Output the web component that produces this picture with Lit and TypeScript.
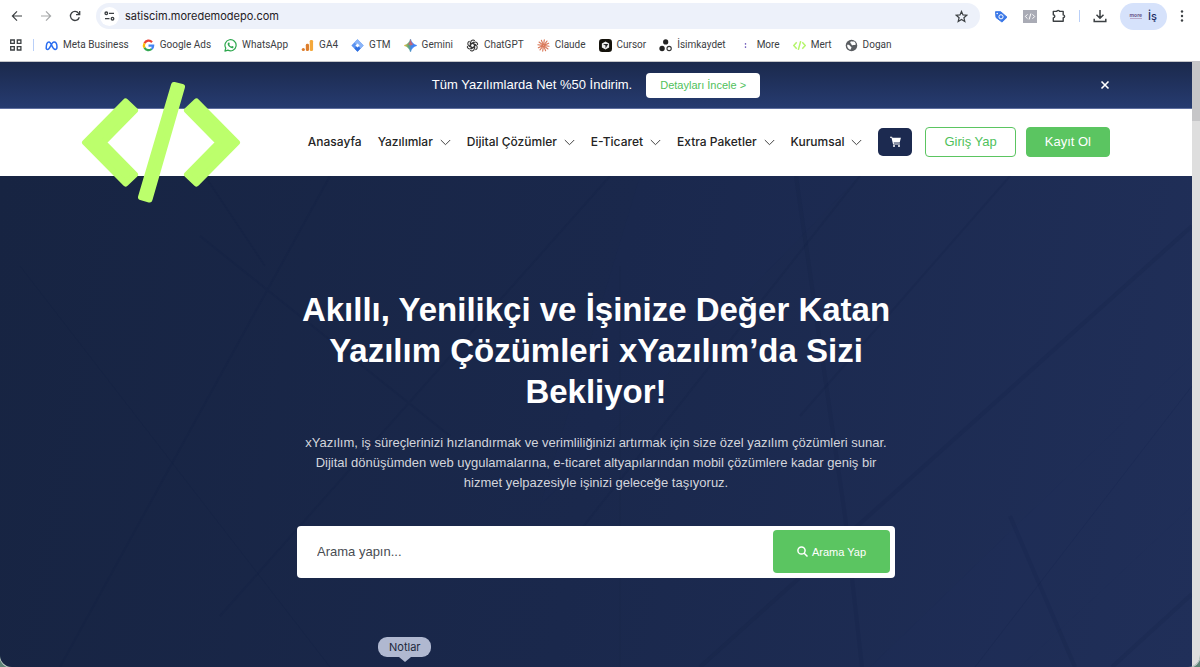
import { LitElement, html, css, svg, nothing } from "lit";
import { customElement } from "lit/decorators.js";

const bookmarkIcons: Record<string, unknown> = {
  meta: svg`<path d="M1.300 10C1.300 6 2.600 3.200 4.300 3.200c2.700 0 3.300 8 6.600 8 1.400 0 2-1.100 2-2.600C12.900 5.400 11.600 3.200 9.700 3.200c-2.900 0-4.200 8-6.800 8-1 0-1.600-.4-1.600-1.200z" fill="none" stroke="#2a6df0" stroke-width="1.600"/>`,
  google: svg`<g fill="none" stroke-width="2.400"><path d="M10.800 3.400A4.900 4.900 0 0 0 2.700 4.600" stroke="#ea4335"/><path d="M2.700 4.600a5 5 0 0 0 0 4.800" stroke="#fbbc05"/><path d="M2.700 9.400a5 5 0 0 0 7.700 1.400" stroke="#34a853"/><path d="M10.400 10.800A5 5 0 0 0 12 7.200H7" stroke="#4285f4"/></g>`,
  whatsapp: svg`<path d="M1 13l.9-3.200A6 6 0 1 1 4.200 12z" fill="#fff" stroke="#2fa84f" stroke-width="1.300" stroke-linejoin="round"/><path d="M4.900 3.800c.4-.3.700-.1.900.3l.4 1c.1.300-.4.700-.5 1 .5 1 1.200 1.700 2.200 2.100.3 0 .7-.9 1-.7l1.200.6c.4.200.2 1.100-.3 1.500-1.700 1.100-5.700-1.600-5.900-4.200 0-.7.500-1.300 1-1.600z" fill="#2fa84f"/>`,
  ga: svg`<rect x="9.400" y="1" width="3.600" height="12" rx="1.500" fill="#f4a83a"/><rect x="5.200" y="5.200" width="3.400" height="7.800" rx="1.500" fill="#dd7d2b"/><circle cx="2.500" cy="11.300" r="1.700" fill="#dd7d2b"/>`,
  gtm: svg`<path d="M7 .4 13.600 7 7 13.600.4 7z" fill="#5b93f0"/><path d="M7 .4 13.600 7 10.300 10.300 3.700 3.700z" fill="#8ab4f8"/><path d="M7 7l3.300 3.300L7 13.600 3.700 10.300z" fill="#2f6fe0"/><path d="M7 4.800 9.200 7 7 9.200 4.800 7z" fill="#fff"/>`,
  gemini: svg`<defs><linearGradient id="gem" x1="0" y1="0" x2="1" y2="0"><stop offset="0" stop-color="#f3c13a"/><stop offset=".35" stop-color="#5fa779"/><stop offset=".6" stop-color="#3f82f5"/><stop offset="1" stop-color="#4285f4"/></linearGradient></defs><path d="M7 0C7.900 3.500 10.500 6.100 14 7 10.500 7.900 7.900 10.500 7 14 6.100 10.500 3.500 7.900 0 7 3.500 6.100 6.100 3.500 7 0z" fill="url(#gem)" stroke="url(#gem)" stroke-width=".5"/><path d="M7 0C7.700 3 8.800 4.800 10 5.800L7 7 4.200 5.700C5.700 4.700 6.600 3 7 0z" fill="#e85a5a" opacity=".75"/>`,
  chatgpt: svg`<g fill="none" stroke="#333" stroke-width="1.100">${[0, 60, 120, 180, 240, 300].map((a) => svg`<path d="M5 7.900V3.700a2.500 2.500 0 0 1 4.400-1.600M5 5.400l3.800-2.200" transform="rotate(${a} 7 7)"/>`)}</g>`,
  claude: svg`<g stroke="#d97757" stroke-width="1.200" stroke-linecap="round">${[8, 38, 66, 98, 128, 158, 188, 218, 246, 278, 308, 338].map((a) => svg`<path d="M7 6V.9" transform="rotate(${a} 7 7)"/>`)}</g>`,
  cursor: svg`<rect width="14" height="14" rx="3.500" fill="#14120b"/><path d="M7 2.600l3.900 2.200v4.400L7 11.400 3.100 9.200V4.800z" fill="#eee"/><path d="M4.200 5.300h5.700L7 10.200V7z" fill="#222"/>`,
  isim: svg`<circle cx="7.200" cy="3.200" r="2.800" fill="#222"/><circle cx="3.300" cy="10.200" r="2.900" fill="#222"/><circle cx="10.900" cy="10.200" r="2.300" fill="none" stroke="#333" stroke-width="1.200"/>`,
  more: svg`<path d="M7 4.400v1.800M7 7.800v1.800" stroke="#7a68c0" stroke-width="1.400"/>`,
  mert: svg`<path d="M4 3.600.8 7 4 10.400M10 3.600 13.200 7 10 10.400M8.300 2.300 5.700 11.700" fill="none" stroke="#b4f56a" stroke-width="1.600"/>`,
  dogan: svg`<circle cx="7" cy="7" r="6.200" fill="#5a5d61"/><path d="M2.300 6.200c1.700-.4 2.700.2 3 1.200.2.800 1.500.7 1.600 1.700.1.900-.8 1.100-.9 2.500C3.700 11.200 2 9 2.300 6.200zM6.700 2.400c1 .6 2.500-.1 3.200.4.900.7 1.600 1.800 1.800 3-.8.700-2 .2-2.700.700-.8.600-2 .2-2.100-.8-.1-.8-1.100-.9-1.200-1.700-.1-.7.400-1.300 1-1.600z" fill="#fff"/>`,
};

const bookmarks: [string, string][] = [
  ["meta", "Meta Business"],
  ["google", "Google Ads"],
  ["whatsapp", "WhatsApp"],
  ["ga", "GA4"],
  ["gtm", "GTM"],
  ["gemini", "Gemini"],
  ["chatgpt", "ChatGPT"],
  ["claude", "Claude"],
  ["cursor", "Cursor"],
  ["isim", "İsimkaydet"],
  ["more", "More"],
  ["mert", "Mert"],
  ["dogan", "Dogan"],
];

@customElement("browser-bar")
export class BrowserBar extends LitElement {
  static styles = css`
    :host {
      display: block;
      background: #fff;
      border-bottom: 1px solid #c5c5c9;
      font-family: Inter, sans-serif;
      color: #3c4043;
    }
    button {
      border: 0;
      padding: 0;
      background: none;
      color: inherit;
      font: inherit;
      display: grid;
      place-items: center;
    }
    svg {
      display: block;
    }
    .tools {
      display: flex;
      align-items: center;
      height: 32px;
      padding: 0 16px 0 9px;
    }
    .nav {
      display: flex;
      gap: 14px;
      margin-right: 14px;
    }
    .nav button {
      width: 15px;
      height: 24px;
    }
    .dim {
      opacity: 0.45;
    }
    .address {
      flex: 1;
      display: flex;
      align-items: center;
      gap: 6px;
      height: 26px;
      padding: 0 12px 0 4px;
      border-radius: 13px;
      background: #edf1fa;
    }
    .site {
      width: 19px;
      height: 19px;
      border-radius: 50%;
      background: #fff;
    }
    .url {
      flex: 1;
      min-width: 0;
      border: 0;
      padding: 0;
      background: none;
      font: 11px/16px Inter, sans-serif;
      color: #1f2024;
      outline: 0;
    }
    .actions {
      display: flex;
      align-items: center;
      gap: 15px;
      padding-left: 14px;
    }
    .split {
      width: 1px;
      height: 12px;
      margin: 0 -2px;
      background: #b9cff8;
    }
    .profile {
      display: flex;
      align-items: center;
      gap: 6px;
      height: 27px;
      padding: 0 10px;
      margin: 0 -2px;
      border-radius: 14px;
      background: #d6e2fb;
      color: #1c2f66;
      font-size: 11px;
      font-weight: 500;
    }
    .badge {
      font-size: 5px;
      font-weight: 700;
      color: #6d5a8a;
      border-bottom: 1px solid #b9a9c9;
      line-height: 5px;
    }
    .marks {
      display: flex;
      align-items: center;
      gap: 13px;
      height: 26px;
      padding: 0 10px 3px 9px;
      overflow: hidden;
    }
    .mark {
      display: flex;
      align-items: center;
      gap: 5px;
      color: #3c4043;
      text-decoration: none;
      font: 10px/14px Roboto, sans-serif;
      white-space: nowrap;
    }
  `;

  render() {
    return html`
      <div class="tools">
        <div class="nav">
          <button aria-label="Geri"><svg width="12" height="12" viewBox="0 0 12 12" fill="none" stroke="#3c4043" stroke-width="1.200"><path d="M11 6H1.500M6 1.300 1.400 6 6 10.700" /></svg></button>
          <button class="dim" aria-label="İleri"><svg width="12" height="12" viewBox="0 0 12 12" fill="none" stroke="#3c4043" stroke-width="1.200"><path d="M1 6h9.500M6 1.300 10.600 6 6 10.700" /></svg></button>
          <button aria-label="Yenile"><svg width="12" height="12" viewBox="0 0 12 12" fill="none" stroke="#3c4043" stroke-width="1.300"><path d="M10.300 7.200A4.500 4.500 0 1 1 9.600 3.300L10.700 4.600M10.700.9v3.800H7" /></svg></button>
        </div>
        <div class="address">
          <button class="site" aria-label="Site bilgileri"><svg width="11" height="10" viewBox="0 0 11 10" fill="none" stroke="#3c4043" stroke-width="1.300"><circle cx="2.300" cy="2.300" r="1.300" /><path d="M5 2.300h5M1 7.700h4.500" /><circle cx="8.500" cy="7.700" r="1.300" /></svg></button>
          <input class="url" type="text" aria-label="Adres" value="satiscim.moredemodepo.com" />
          <button aria-label="Yer işareti ekle"><svg width="13" height="13" viewBox="0 0 13 13" fill="none" stroke="#3c4043" stroke-width="1.200"><path d="M6.500 1.400 8 4.900l3.800.3-2.900 2.500.9 3.700-3.300-2-3.300 2 .9-3.700L1.200 5.200 5 4.900z" /></svg></button>
        </div>
        <div class="actions">
          <button aria-label="Etiket yardımcısı"><svg width="14" height="13" viewBox="0 0 14 13"><path d="M1.500 1.700h5.200L13 7.200l-5 4.900-6-4.600z" fill="#3b78e7" stroke="#3b78e7" stroke-linejoin="round" /><circle cx="7" cy="6.800" r="2.100" fill="none" stroke="#fff" /><circle cx="3.200" cy="3.500" r=".8" fill="#fff" /></svg></button>
          <button aria-label="Kaynak kodu"><svg width="14" height="13" viewBox="0 0 14 13"><rect width="14" height="13" fill="#a9abb5" /><path d="M4.500 4.300 2.300 6.500l2.200 2.200M9.500 4.300l2.200 2.200-2.200 2.200M7.900 3.500 6.100 9.500" fill="none" stroke="#fff" /></svg></button>
          <button aria-label="Uzantılar"><svg width="14" height="14" viewBox="0 0 14 14" fill="none" stroke="#3c4043" stroke-width="1.400"><path d="M1.300 2.400h3.400C4.900 1 7.400 1 7.600 2.400h3.600v3.500c1.900.2 1.900 2.700 0 2.900v3.500H1.300V8.900c2-.4 2-2.700 0-3.100z" stroke-linejoin="round" /></svg></button>
          <span class="split"></span>
          <button aria-label="İndirilenler"><svg width="14" height="14" viewBox="0 0 14 14" fill="none" stroke="#3c4043" stroke-width="1.500"><path d="M7 1v8M3.500 5.800 7 9.300l3.500-3.500M1.200 9.800v2.700h11.600V9.800" /></svg></button>
          <button class="profile"><span class="badge">more</span><span>İş</span></button>
          <button aria-label="Menü"><svg width="4" height="14" viewBox="0 0 4 14" fill="#3c4043"><circle cx="2" cy="2.500" r="1.200" /><circle cx="2" cy="7" r="1.200" /><circle cx="2" cy="11.500" r="1.200" /></svg></button>
        </div>
      </div>
      <nav class="marks" aria-label="Yer işaretleri">
        <button aria-label="Uygulamalar"><svg width="13" height="12" viewBox="0 0 13 12" fill="none" stroke="#3c4043" stroke-width="1.300"><path d="M1.700 1h3.600v3.400H1.700zM8.300 1h3.600v3.400H8.300zM1.700 7.600h3.600V11H1.700zM8.300 7.600h3.600V11H8.300z" /></svg></button>
        <span class="split"></span>
        ${bookmarks.map(
          ([icon, label]) => html`<a class="mark" href="#"><svg width="13" height="13" viewBox="0 0 14 14">${bookmarkIcons[icon]}</svg>${label}</a>`
        )}
      </nav>
    `;
  }
}

const menu = [
  { label: "Anasayfa", sub: false },
  { label: "Yazılımlar", sub: true },
  { label: "Dijital Çözümler", sub: true },
  { label: "E-Ticaret", sub: true },
  { label: "Extra Paketler", sub: true },
  { label: "Kurumsal", sub: true },
];

@customElement("site-header")
export class SiteHeader extends LitElement {
  static styles = css`
    :host {
      display: block;
      font-family: "Liberation Sans", Arial, sans-serif;
    }
    button {
      border: 0;
      padding: 0;
      background: none;
      font: inherit;
    }
    .promo {
      display: grid;
      grid-template-columns: 1fr auto 1fr;
      align-items: center;
      height: 46px;
      padding: 0 82px;
      background: linear-gradient(#1b294c, #263b70);
      border-bottom: 1px solid #5f6f9f;
      color: #fff;
    }
    .offer {
      grid-column: 2;
      display: flex;
      align-items: center;
      gap: 14px;
      font-size: 13px;
      line-height: 20px;
    }
    .detail {
      padding: 0 14px;
      border-radius: 4px;
      background: #fff;
      color: #4fc15b;
      font-size: 11px;
      line-height: 25px;
      text-decoration: none;
    }
    .close {
      justify-self: end;
      width: 10px;
      height: 10px;
    }
    svg {
      display: block;
    }
    .bar {
      position: relative;
      display: flex;
      align-items: center;
      justify-content: flex-end;
      height: 66px;
      padding: 0 82px 1px;
      background: #fff;
    }
    .logo {
      position: absolute;
      left: 81px;
      top: -28px;
      z-index: 2;
    }
    .menu {
      display: flex;
      gap: 16px;
      margin-right: 16px;
      font-family: Inter, sans-serif;
      font-size: 12px;
      font-weight: 500;
      line-height: 20px;
    }
    .menu a {
      display: flex;
      align-items: center;
      gap: 7px;
      color: #242424;
      text-decoration: none;
      white-space: nowrap;
    }
    .actions {
      display: flex;
      align-items: center;
      gap: 10px;
      font-size: 13px;
    }
    .cart {
      display: grid;
      place-items: center;
      width: 34px;
      height: 28px;
      margin-right: 3px;
      border-radius: 5px;
      background: #1c2a50;
    }
    .btn {
      padding: 0 18px;
      border: 1px solid #5bc561;
      border-radius: 4px;
      color: #4fc15b;
      line-height: 28px;
      text-decoration: none;
      white-space: nowrap;
    }
    .solid {
      background: #5bc561;
      color: #fff;
    }
  `;

  render() {
    return html`
      <div class="promo">
        <div class="offer">
          <span>Tüm Yazılımlarda Net %50 İndirim.</span>
          <a class="detail" href="#">Detayları İncele &gt;</a>
        </div>
        <button class="close" aria-label="Kapat"><svg width="10" height="10" viewBox="0 0 10 10" stroke="#fff" stroke-width="1.600"><path d="M1.500 1.500l7 7M8.500 1.500l-7 7" /></svg></button>
      </div>
      <header class="bar">
        <a class="logo" href="#" aria-label="xYazılım">
          <svg width="160" height="123" viewBox="0 0 160 123" fill="#bcff6c" stroke="#bcff6c" stroke-width="6" stroke-linejoin="round">
            <path d="M44.500 20.500 54 29.500 22.500 61.500 54 93.500 44.500 102.500 4 61.500z" />
            <path d="M115.500 20.500 106 29.500 137.500 61.500 106 93.500 115.500 102.500 156 61.500z" />
            <path d="M93 4 101 6 68.500 118.500 60 116z" />
          </svg>
        </a>
        <nav class="menu">
          ${menu.map(
            (m) => html`<a href="#">${m.label}${m.sub
              ? html`<svg width="11" height="7" viewBox="0 0 11 7" fill="none" stroke="#444"><path d="M.8 1 5.500 5.700 10.200 1" /></svg>`
              : nothing}</a>`
          )}
        </nav>
        <div class="actions">
          <button class="cart" aria-label="Sepet"><svg width="13" height="12" viewBox="0 0 13 12" fill="#fff"><path d="M1 .8h2.100l.3 1h8.500L10.700 6.600H4.700l.2 1h6v.9H4.100L2.500 1.700H1z" /><circle cx="5" cy="10.100" r="1" /><circle cx="10" cy="10.100" r="1" /></svg></button>
          <a class="btn" href="#">Giriş Yap</a>
          <a class="btn solid" href="#">Kayıt Ol</a>
        </div>
      </header>
    `;
  }
}

@customElement("hero-section")
export class HeroSection extends LitElement {
  static styles = css`
    :host {
      display: block;
      position: relative;
      background: linear-gradient(100deg, #172442 0%, #1a284c 50%, #202f59 100%);
      font-family: "Liberation Sans", Arial, sans-serif;
      color: #fff;
      overflow: hidden;
    }
    .texture {
      position: absolute;
      inset: 0;
      width: 100%;
      height: 100%;
    }
    .inner {
      position: relative;
      max-width: 598px;
      margin: 0 auto;
      padding: 113px 0 88px;
      text-align: center;
    }
    h1 {
      margin: 0;
      font-size: 33px;
      line-height: 41px;
      font-weight: 700;
    }
    p {
      margin: 21px 0 33px;
      font-size: 13px;
      line-height: 20px;
      color: #d3d5dc;
    }
    .search {
      display: flex;
      height: 43px;
      padding: 4px 5px 5px;
      border-radius: 4px;
      background: #fff;
    }
    .search input {
      flex: 1;
      min-width: 0;
      border: 0;
      outline: 0;
      padding: 0 15px;
      background: none;
      font: 13px "Liberation Sans", Arial, sans-serif;
    }
    .search input::placeholder {
      color: #484c52;
      opacity: 1;
    }
    .search button {
      display: flex;
      align-items: center;
      gap: 4px;
      padding: 0 24px;
      border: 0;
      border-radius: 4px;
      background: #5bc561;
      color: #fff;
      font: 11px "Liberation Sans", Arial, sans-serif;
    }
  `;

  render() {
    return html`
      <svg class="texture" viewBox="0 0 1192 491" preserveAspectRatio="none" fill="none" stroke="#111d42" stroke-opacity=".14">
        <path d="M200 60 450 260M205 0 265 90M330 0 60 491M610 0 220 440M860 0 560 380M1010 0 800 240" stroke-width="2" />
        <path d="M796 0 845 340 862 491M1010 340 1075 491M1192 50 700 491M1192 418 1112 491" stroke-width="4" />
        <path d="M1192 210 975 491M620 90V491M20 90 330 491" stroke-width="1" />
        <path d="M640 0H860L540 330zM870 491 1192 180V330L1020 491z" fill="#24386b" fill-opacity=".06" stroke="none" />
      </svg>
      <div class="inner">
        <h1>Akıllı, Yenilikçi ve İşinize Değer Katan<br />Yazılım Çözümleri xYazılım’da Sizi<br />Bekliyor!</h1>
        <p>xYazılım, iş süreçlerinizi hızlandırmak ve verimliliğinizi artırmak için size özel yazılım çözümleri sunar.<br />Dijital dönüşümden web uygulamalarına, e-ticaret altyapılarından mobil çözümlere kadar geniş bir<br />hizmet yelpazesiyle işinizi geleceğe taşıyoruz.</p>
        <form class="search" @submit=${(e: Event) => e.preventDefault()}>
          <input type="search" aria-label="Arama" placeholder="Arama yapın..." />
          <button type="submit"><svg width="11" height="11" viewBox="0 0 11 11" fill="none" stroke="#fff" stroke-width="1.500"><circle cx="4.500" cy="4.500" r="3.600" /><path d="M7.200 7.200 10.500 10.500" /></svg>Arama Yap</button>
        </form>
      </div>
    `;
  }
}

@customElement("app-root")
export class AppRoot extends LitElement {
  static styles = css`
    :host {
      display: block;
      background: #5c8274;
    }
    .window {
      position: relative;
      display: flex;
      flex-direction: column;
      min-height: 100vh;
      border-radius: 0 0 12px 12px;
      overflow: hidden;
      box-shadow: 0 0 0 1px #c3cccb;
    }
    .view {
      flex: 1;
      display: flex;
    }
    .page {
      flex: 1;
      min-width: 0;
      display: flex;
      flex-direction: column;
    }
    hero-section {
      flex: 1;
    }
    .track {
      width: 8px;
      background: #dedede;
    }
    .thumb {
      height: 59px;
      background: #c6c6c8;
    }
    .tip {
      position: absolute;
      left: 378px;
      bottom: 10px;
      padding: 0 11px;
      border-radius: 9px;
      background: #b0b8d0;
      color: #20283c;
      font: 11px/20px Inter, sans-serif;
    }
    .tip::after {
      content: "";
      position: absolute;
      left: 50%;
      top: 100%;
      margin-left: -6px;
      border: 6px solid transparent;
      border-top: 5px solid #b0b8d0;
      border-bottom: 0;
    }
  `;

  render() {
    return html`
      <div class="window">
        <browser-bar></browser-bar>
        <div class="view">
          <main class="page">
            <site-header></site-header>
            <hero-section></hero-section>
          </main>
          <div class="track"><div class="thumb"></div></div>
        </div>
        <div class="tip" role="tooltip">Notlar</div>
      </div>
    `;
  }
}
